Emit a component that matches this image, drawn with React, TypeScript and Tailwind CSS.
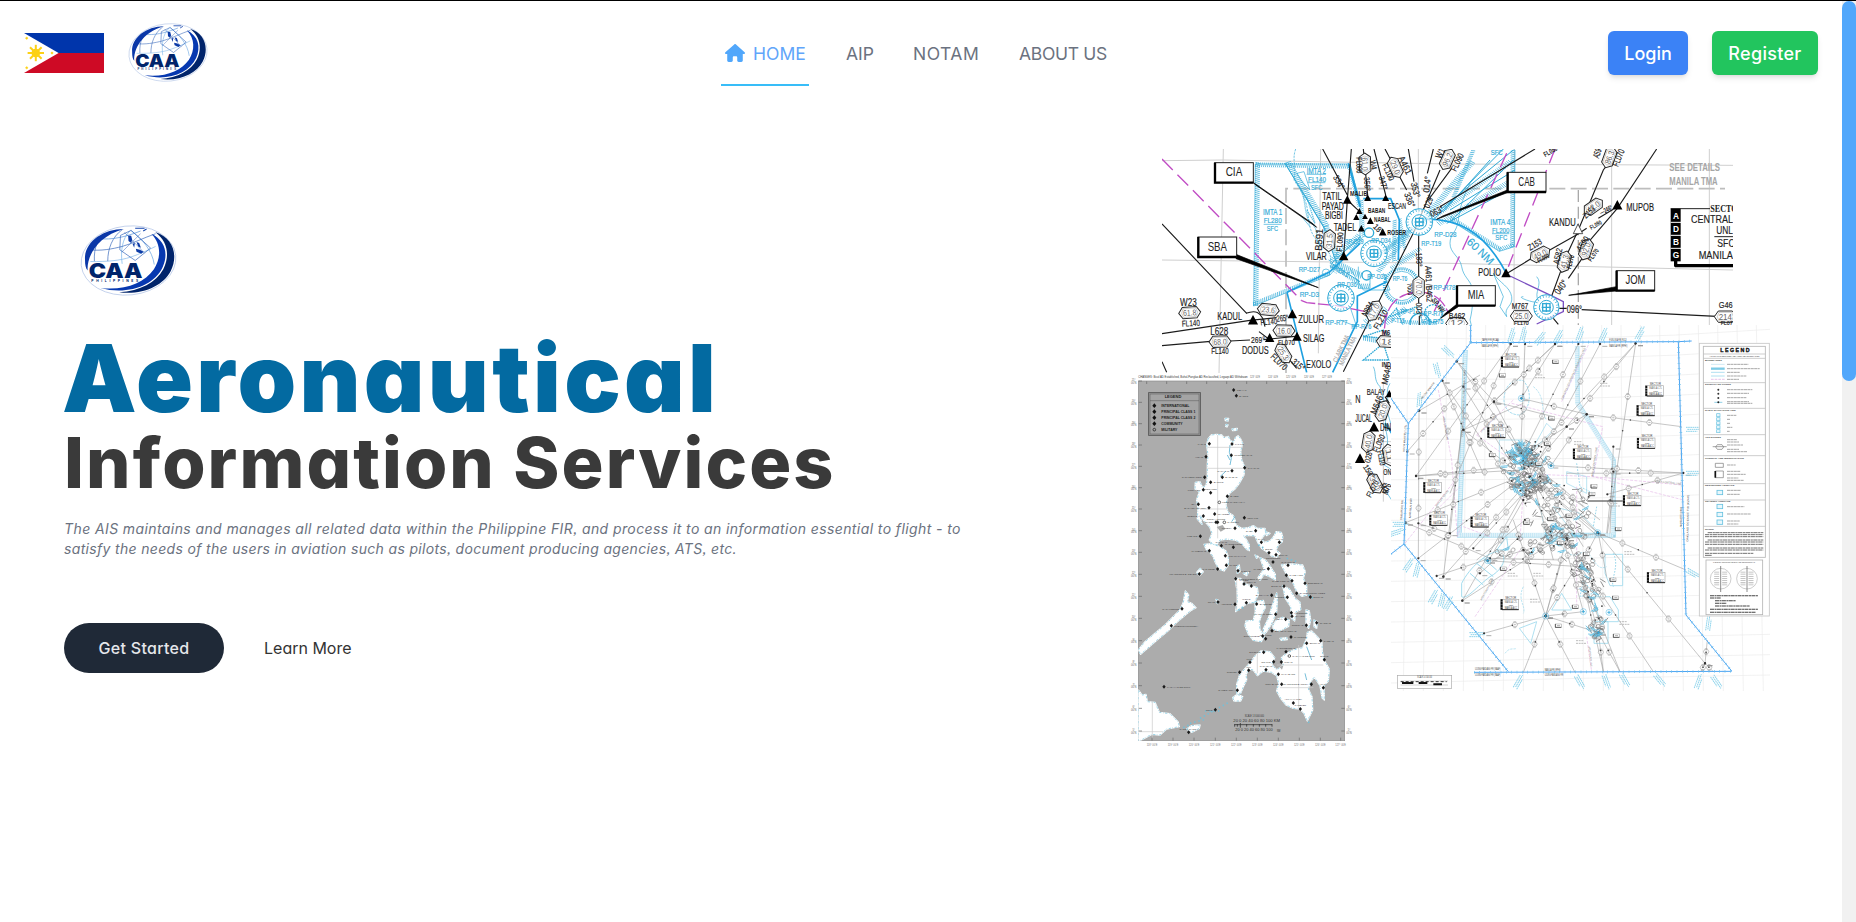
import React from "react";
import { FaHouse } from "react-icons/fa6";

const CYAN = "#2fa9d6";
const SKY = "#1ea0e0";
const MAGENTA = "#c04cc4";

type TextProps = {
  x: number;
  y: number;
  s: number;
  c: string;
  w?: number;
  r?: number;
  fill?: string;
  a?: "start" | "middle" | "end";
  b?: number;
};

/* A chart label: s = size, w = drawn width, r = rotation, a = anchor, b = weight. */
function T({ x, y, s, c, w, r, fill = "#1c1c1c", a = "start", b = 400 }: TextProps) {
  return (
    <text
      x={x}
      y={y}
      fontSize={s}
      fill={fill}
      stroke={s > 17 && b < 700 ? fill : undefined}
      strokeWidth={s > 17 && b < 700 ? 0.5 : undefined}
      textAnchor={a}
      fontWeight={b}
      textLength={w}
      lengthAdjust="spacingAndGlyphs"
      transform={r ? `rotate(${r} ${x} ${y})` : undefined}
    >
      {c}
    </text>
  );
}

function Logo({ className }: { className: string }) {
  return (
    <svg viewBox="119 74 290 212" className={className} preserveAspectRatio="none">
      <ellipse cx="264" cy="180" rx="142" ry="103" fill="#fff" stroke="#b9c9e8" strokeWidth="2.4" transform="rotate(-6 264 180)" />
      <g fill="none" stroke="#2f62b8" strokeWidth="2">
        <path d="M162 182 C160 140 172 110 205 96" />
        <path d="M202 182 C202 145 215 110 245 88" />
        <path d="M245 190 C240 150 245 115 268 92" stroke="#6fb1ea" />
        <path d="M270 90 C305 115 335 150 341 192" stroke="#5a9ce0" />
        <path d="M148 148 C180 152 215 146 245 138 S310 112 345 100" />
        <path d="M150 183 C200 184 240 180 270 170 S320 150 345 138" stroke="#7db6ea" />
        <path d="M180 115 C210 118 250 112 300 92" stroke="#4d8bd6" />
        <path d="M240 105 L272 90 L330 143 L284 180 L238 148 Z" />
        <path d="M244 155 L300 100 M252 96 L312 158" strokeWidth="1.4" />
        <path d="M284 84 H312 M318 86 L308 92" stroke="#1746ae" strokeWidth="3" />
      </g>
      <path d="M263 105 L272 106 L275 118 L272 128 L264 122 Z M276 130 L283 128 L281 142 Z M288 125 L296 128 L301 142 L293 138 Z M286 145 L298 148 L309 154 L302 160 L288 154 Z" fill="#0b3aa6" />
      <path d="M250 86 C185 86 130 128 134 178 C134 194 136 204 142 210 C138 172 168 108 250 86 Z" fill="#0a37a8" />
      <path d="M332 100 C374 120 384 160 366 200 C340 256 260 284 180 262 C252 270 310 248 340 206 C362 172 362 130 332 100 Z" fill="#0638b0" />
      <path d="M344 95 C398 112 414 165 390 212 C368 255 306 284 236 275 C300 270 346 246 368 206 C388 166 382 124 344 95 Z" fill="#00246b" />
      <g fontFamily="Inter, sans-serif" fill="#00246b">
        <text x="145" y="231" fontSize="62" fontWeight="900" textLength="161" lengthAdjust="spacingAndGlyphs">CAA</text>
        <text x="153" y="243" fontSize="10" fontWeight="700" textLength="140">PHILIPPINES</text>
      </g>
    </svg>
  );
}

function Flag() {
  return (
    <svg viewBox="0 0 80 40" className="h-10 w-20">
      <rect width="80" height="20" fill="#0035ab" />
      <rect y="20" width="80" height="20" fill="#ce0a25" />
      <path d="M0 0 L34.6 20 L0 40 Z" fill="#fff" />
      <g fill="#fcd116" stroke="#fcd116">
        <circle cx="11.8" cy="20" r="4.3" stroke="none" />
        {[0, 45, 90, 135].map((d) => (
          <path key={d} d="M3.6 20 H20" strokeWidth="2" transform={`rotate(${d} 11.8 20)`} />
        ))}
        <circle cx="2.7" cy="5.2" r="1" strokeWidth=".6" />
        <circle cx="2.7" cy="34.8" r="1" strokeWidth=".6" />
        <circle cx="28" cy="20" r="1" strokeWidth=".6" />
      </g>
    </svg>
  );
}

/* ------------------------------------------------------------------ */
/* Terminal area chart                                                 */
/* ------------------------------------------------------------------ */

type Hex = [number, number, number, string];
const HEXES: Hex[] = [
  [119, 518, -4, "61.8"], [210, 605, -2, "68.0"], [355, 509, 6, "23.6"], [402, 572, 2, "16.0"],
  [400, 640, 58, "25.3"], [538, 302, -86, "31.5"], [645, 72, 88, "61.0"], [736, 82, 66, "29.0"],
  [892, 58, -66, "96.2"], [672, 512, -62, "17.0"], [806, 442, 90, "70.0"], [1378, 52, -70, "86.3"],
  [1330, 200, -35, "42.0"], [1308, 328, -72, "92.0"], [1243, 365, -76, "41.3"], [1170, 343, -28, "49.0"],
  [1114, 528, 0, "25.0"], [1726, 530, 0, "214"], [698, 813, -70, "20.0"], [655, 905, -80, "40.0"],
  [675, 1030, 62, "31.0"], [712, 605, 4, "18"], [718, 945, 80, "11"], [920, 550, 0, "12"],
];

const FIXES: [number, number, number][] = [
  [592, 180, 14], [653, 174, 11], [707, 174, 11], [628, 214, 10], [619, 232, 10], [645, 230, 9], [661, 243, 11],
  [634, 266, 11], [698, 277, 12], [581, 349, 15], [309, 541, 16], [427, 523, 15], [441, 590, 15], [359, 594, 15],
  [1402, 196, 16], [1068, 400, 15], [718, 762, 12], [672, 862, 16], [630, 956, 16],
];

const VORS: [number, number, number][] = [
  [808, 246, 40], [672, 340, 40], [573, 474, 40], [1189, 502, 38],
];

function hatch(x1: number, y1: number, x2: number, y2: number, h: number) {
  const len = Math.hypot(x2 - x1, y2 - y1);
  const ux = (x2 - x1) / len;
  const uy = (y2 - y1) / len;
  let d = "";
  for (let t = 0; t < len; t += 6) {
    const x = x1 + ux * t;
    const y = y1 + uy * t;
    d += `M${x.toFixed(1)} ${y.toFixed(1)}l${(-uy * h + ux * 4).toFixed(1)} ${(ux * h + uy * 4).toFixed(1)}`;
  }
  return d;
}

const BANDS: [number, number, number, number, number][] = [
  [596, 72, 316, 67, -14], [316, 67, 311, 498, -14], [311, 498, 540, 405, -12], [405, 70, 520, 260, -18],
  [520, 260, 560, 370, -16], [600, 72, 632, 200, 10], [632, 290, 545, 370, 14], [545, 370, 630, 425, 12],
  [790, 270, 690, 350, 14], [800, 250, 960, 60, 18], [830, 235, 1075, 60, 16], [860, 245, 1090, 110, 16],
  [1095, 30, 1093, 320, 13], [1093, 320, 1048, 334, 12], [1048, 334, 900, 240, 13], [905, 170, 965, 27, 12],
  [740, 240, 738, 360, 12], [738, 360, 810, 320, 12], [640, 180, 645, 290, 10], [625, 445, 660, 445, -14], [700, 330, 820, 230, 16],
  [780, 290, 690, 400, 14], [640, 300, 600, 330, 14], [560, 360, 640, 400, 18], [760, 330, 745, 240, 10], [720, 380, 790, 340, 12],
  [640, 540, 700, 500, 18], [700, 540, 760, 500, 20], [760, 540, 860, 545, 12], [640, 585, 715, 600, 16],
];

const BOXES: [number, number, number, number, string, string][] = [
  [194, 68, 116, 60, "CIA", "305,124 316,134 500,262 490,252"],
  [144, 291, 116, 60, "SBA", "258,343 258,356 505,443 420,408"],
  [1072, 97, 116, 59, "CAB", "1072,150 1072,158 860,238 878,228"],
  [920, 437, 116, 60, "MIA", "920,493 925,500 872,535 886,520"],
  [1399, 392, 115, 60, "JOM", "1399,440 1399,453 1256,466 1290,460"],
];

const ROUTES = [
  "M36 252 L290 520 M36 581 L300 541 L380 533 M36 617 L182 604 M240 603 L300 600 M340 599 L435 589",
  "M36 665 L50 697 M580 695 L792 275 M792 275 L870 90 M806 280 V415 M806 468 V490 M808 528 V556",
  "M518 27 L592 165 M604 27 L592 180 L581 350 M592 180 L628 214 M640 27 L653 165 M672 27 L707 165 M705 27 L770 150 M775 27 L792 125",
  "M905 85 L835 180 M850 27 L832 100 M1155 27 L870 200 M1520 27 L1402 205 L1312 310 M1300 350 L1255 415 M1390 50 L1360 90 L1285 270 L1248 350 L1205 468",
  "M1068 402 L1150 352 M1190 335 L1283 283 L1310 265 M1345 235 L1390 208 M1228 505 H1250 M1295 509 L1700 529 M1210 535 L1225 553",
  "M288 520 C320 508 330 520 338 535 L345 560 M327 575 L360 600 M415 655 L440 685 M700 860 L722 868 M705 770 L718 790",
];

function AreaChart() {
  return (
    <svg
      viewBox="36 27 1713 1059"
      className="absolute left-8 top-0 h-[353px] w-[571px]"
      fontFamily="'Liberation Sans Narrow', 'Liberation Sans', sans-serif"
    >
      <rect x="36" y="27" width="1713" height="1059" fill="#fff" />
      <g stroke="#cfcfcf" strokeWidth="3" fill="none">
        <path d="M36 62 L220 60 L900 72 L1749 76 M36 360 L900 370 L1749 390 M220 27 L207 700 M512 27 L505 640 M805 27 V220 M1093 27 L1092 556 M1385 27 V556 M1678 27 V556 M700 730 V1085 M700 905 H725 M700 995 H725" />
      </g>
      <path d="M408 700 V146 H1725" stroke="#bdbdbd" strokeWidth="5" fill="none" strokeDasharray="48 16" />
      <path d="M1285 150 V556" stroke="#a9a9a9" strokeWidth="4" strokeDasharray="36 14" />

      <g fill="none" stroke={CYAN} strokeWidth="2">
        <path d={BANDS.map((b) => hatch(...b)).join("")} strokeWidth="2.2" />
        <path d="M596 72 H316 L311 498 L540 405 L630 300 V180 L596 72 M405 70 L540 290 M1095 30 L1093 320 L1048 334 L900 240" />
        <path d="M437 27 C425 60 440 80 432 120 C450 150 470 170 475 230 S500 300 530 330 S520 380 560 400" strokeDasharray="7 3" />
        <path d="M452 150 C470 180 460 230 485 250 S490 300 515 320 M470 170 L495 250 L470 210" strokeDasharray="4 2" strokeWidth="4" strokeOpacity=".7" />
        <path d="M900 245 L1090 60 M850 240 L1060 27 M880 215 L1020 60 M890 250 L1095 140 M870 210 L1090 30 M900 210 L1095 90" strokeWidth="3" />
        <path d="M960 130 C940 170 930 200 925 240 S900 280 900 310 S930 350 935 380 S960 420 965 440 S970 500 960 540 L965 560" />
        <path d="M1160 410 C1180 430 1150 460 1165 480 S1090 470 1120 470 M1030 400 C1050 430 1080 440 1085 470 S1060 500 1070 530 L1050 500 L1060 470 Z" />
        <path d="M440 100 L462 95 L480 150 L460 130 Z M455 230 L480 260 M600 385 L640 450 L720 450 L700 400 M570 540 L620 560 L600 500 M625 380 V445 H660 V400" />
        <path d="M640 660 L700 610 L716 660 Z M690 560 L740 505 L760 560 M720 530 L800 500 L820 550 M640 590 L700 570 L720 595 Z" strokeDasharray="5 2" strokeWidth="4" />
        <path d="M720 730 C700 760 725 790 710 830 S730 900 700 940 S740 980 722 1000 M690 740 L722 850 M705 1050 L725 1080 M670 680 C680 700 670 720 690 740" />
        {BANDS.slice(3, 8).map((b, i) => (
          <path key={i} d={`M${b[0]} ${b[1]} L${b[2]} ${b[3]}`} strokeWidth="3" />
        ))}
        <circle cx="755" cy="438" r="52" strokeWidth="9" strokeDasharray="3 3" />
        <circle cx="755" cy="438" r="44" />
        <circle cx="657" cy="278" r="14" strokeWidth="4" />
        <circle cx="650" cy="406" r="14" strokeWidth="4" />
        <circle cx="528" cy="398" r="11" />
        <circle cx="850" cy="520" r="26" strokeWidth="4" strokeDasharray="6 3" />
        <circle cx="810" cy="550" r="30" strokeWidth="4" />
      </g>
      <g fill="none" stroke={SKY} strokeWidth="5">
        <path d="M595 70 L630 200 M640 176 H722 L748 240 L745 360 M808 238 C920 232 1000 270 1068 398" />
        <path d="M411 457 L540 395 M411 457 L470 697 M548 697 L622 545 V468 L710 425 M540 395 L630 310" />
        <path d="M705 850 L725 880" />
      </g>
      <g fill="none" stroke={MAGENTA} strokeWidth="4">
        <path d="M36 57 L455 482" strokeDasharray="46 20" />
        <path d="M455 482 L470 488 L560 497 L710 528" strokeDasharray="42 8" />
        <path d="M706 620 C690 500 740 460 806 456 C850 456 880 480 895 520" strokeDasharray="46 8" />
        <path d="M1070 40 L850 520 M1215 27 L1075 380" strokeDasharray="46 22" />
        <path d="M1080 408 L1210 470 L1240 485 V515 L1160 552" stroke="#7a4fc0" />
      </g>

      <g fill="none" stroke="#1c1c1c" strokeWidth="3.4">
        {ROUTES.map((d) => (
          <path key={d} d={d} />
        ))}
      </g>

      {VORS.map(([x, y, r]) => (
        <g key={`${x}-${y}`} fill="#fff" stroke={CYAN} strokeWidth="3">
          <circle cx={x} cy={y} r={r} fillOpacity=".7" />
          <circle cx={x} cy={y} r={r - 5} fill="none" strokeWidth="7" strokeDasharray="2 7" />
          <circle cx={x} cy={y} r={r * 0.55} fill="none" />
          <path d={`M${x - 11} ${y - 11} h22 v22 h-22 Z M${x - 14} ${y} h28 M${x} ${y - 14} v28`} strokeWidth="4" />
        </g>
      ))}

      {HEXES.map(([x, y, r, t], i) => (
        <g key={i} transform={`translate(${x} ${y}) rotate(${r})`}>
          <path d="M-33 0 L-21 -17 H21 L33 0 L21 17 H-21 Z" fill="#fff" stroke="#2a2a2a" strokeWidth="3" />
          <path d="M-24 0 L-19 -13 H19 L24 0 L19 13 H-19 Z" fill="none" stroke="#888" strokeWidth="1.2" />
          <text y="9" fontSize="25" textAnchor="middle" fill="#666" textLength="40" lengthAdjust="spacingAndGlyphs">{t}</text>
        </g>
      ))}

      {FIXES.map(([x, y, h]) => (
        <path key={`${x}-${y}`} d={`M${x} ${y - h} L${x + h * 0.95} ${y + h * 0.8} H${x - h * 0.95} Z`} fill="#000" />
      ))}
      <path d="M1284 252 L1298 281 H1270 Z" fill="#fff" stroke="#333" strokeWidth="2.5" />

      <g fill="#111">
        <T x={517} y={181} s={33} w={58} c="TATIL" />
        <T x={515} y={210} s={31} w={66} c="PAYAD" />
        <T x={525} y={238} s={31} w={54} c="BIGBI" />
        <T x={551} y={273} s={32} w={68} c="TADEL" />
        <T x={600} y={169} s={24} w={52} c="MALIB" b={700} />
        <T x={714} y={207} s={25} w={54} c="ESCAN" />
        <T x={654} y={220} s={24} w={52} c="BABAN" b={700} />
        <T x={672} y={245} s={23} w={50} c="NABAL" b={700} />
        <T x={712} y={284} s={24} w={56} c="ROSER" b={700} />
        <T x={468} y={360} s={34} w={62} c="VILAR" />
        <T x={202} y={539} s={35} w={74} c="KADUL" />
        <T x={445} y={548} s={35} w={77} c="ZULUR" />
        <T x={459} y={605} s={35} w={64} c="SILAG" />
        <T x={276} y={641} s={35} w={80} c="DODUS" />
        <T x={468} y={685} s={35} w={76} c="EXOLO" />
        <T x={90} y={497} s={34} w={50} c="W23" />
        <T x={96} y={560} s={26} w={54} c="FL140" r={-3} />
        <T x={181} y={586} s={32} w={54} c="L628" />
        <T x={184} y={641} s={26} w={52} c="FL140" />
        <T x={303} y={608} s={29} w={42} c="269°" />
        <T x={380} y={545} s={27} w={36} c="265°" r={-4} />
        <T x={332} y={556} s={24} w={50} c="FL140" r={-5} />
        <T x={384} y={614} s={22} w={50} c="FL070" />
        <T x={360} y={652} s={27} w={58} c="FL070" r={44} />
        <T x={423} y={668} s={27} w={42} c="315°" r={40} />
        <T x={515} y={333} s={30} w={66} c="B591" r={-86} />
        <T x={576} y={335} s={24} w={58} c="FL090" r={-86} />
        <T x={548} y={112} s={26} w={44} c="334°" r={60} />
        <T x={618} y={52} s={24} w={48} c="FL080" r={88} />
        <T x={642} y={112} s={24} w={42} c="356°" r={86} />
        <T x={660} y={62} s={24} w={28} c="W4" r={80} />
        <T x={686} y={112} s={24} w={40} c="347°" r={74} />
        <T x={696} y={74} s={24} w={54} c="FL100" r={66} />
        <T x={744} y={54} s={28} w={58} c="A461" r={64} />
        <T x={782} y={130} s={27} w={46} c="353°" r={76} />
        <T x={762} y={162} s={27} w={46} c="336°" r={68} />
        <T x={838} y={158} s={27} w={48} c="014°" r={-84} />
        <T x={838} y={206} s={27} w={40} c="029°" r={-68} />
        <T x={846} y={232} s={27} w={42} c="063°" r={-28} />
        <T x={874} y={58} s={30} w={30} c="W1" r={-66} />
        <T x={918} y={96} s={27} w={56} c="FL090" r={-64} />
        <T x={798} y={338} s={25} w={42} c="183°" r={88} />
        <T x={826} y={378} s={26} w={108} c="A461 /B462" r={88} />
        <T x={798} y={488} s={25} w={42} c="003°" r={88} />
        <T x={772} y={430} s={18} w={36} c="7000" r={88} />
        <T x={650} y={532} s={27} w={46} c="N884" r={-60} />
        <T x={684} y={570} s={25} w={62} c="FL210" r={-60} />
        <T x={668} y={262} s={24} w={32} c="18°" r={45} />
        <T x={695} y={586} s={24} w={26} c="M6" b={700} />
        <T x={695} y={680} s={22} w={28} c="IND" b={700} />
        <T x={712} y={735} s={26} w={58} c="M646" r={-78} />
        <T x={650} y={765} s={26} w={56} c="BALAY" />
        <T x={678} y={825} s={28} w={58} c="M646" r={-68} />
        <T x={616} y={790} s={34} w={16} c="N" />
        <T x={616} y={847} s={30} w={50} c="JUCAL" />
        <T x={690} y={872} s={30} w={34} c="DIN" />
        <T x={684} y={940} s={26} w={56} c="FL090" r={-66} />
        <T x={660} y={970} s={25} w={40} c="028°" r={-78} />
        <T x={682} y={932} s={24} w={46} c="FL110" r={80} />
        <T x={638} y={980} s={24} w={44} c="150°" r={58} />
        <T x={662} y={1074} s={24} w={54} c="FL070" r={-62} />
        <T x={700} y={1006} s={28} w={24} c="ON" />
        <T x={712} y={1066} s={28} w={34} c="M76" r={-66} />
        <T x={688} y={1036} s={26} w={28} c="M3" r={60} />

        <T x={985} y={408} s={34} w={68} c="POLIO" />
        <T x={1197} y={258} s={35} w={80} c="KANDU" />
        <T x={1429} y={214} s={34} w={83} c="MUPOB" />
        <T x={1140} y={332} s={26} w={44} c="Z153" r={-30} />
        <T x={1166} y={370} s={20} w={38} c="FL090" r={-28} b={700} />
        <T x={1308} y={236} s={24} w={40} c="Z153" r={-42} />
        <T x={1324} y={270} s={19} w={38} c="FL090" r={-30} b={700} />
        <T x={1354} y={226} s={22} w={40} c="—246°" r={-28} b={700} />
        <T x={1226} y={374} s={26} w={48} c="A582" r={-76} />
        <T x={1262} y={388} s={20} w={42} c="FL070" r={-74} b={700} />
        <T x={1292} y={336} s={26} w={48} c="A590" r={-56} />
        <T x={1324} y={366} s={20} w={42} c="FL070" r={-56} b={700} />
        <T x={1228} y={466} s={30} w={46} c="040°" r={-55} />
        <T x={1250} y={519} s={30} w={46} c="096°" />
        <T x={1085} y={508} s={28} w={50} c="M767" />
        <T x={1092} y={556} s={18} w={44} c="FL170" />
        <T x={896} y={538} s={28} w={50} c="B462" />
        <T x={1346} y={56} s={28} w={28} c="A59" r={-70} />
        <T x={1404} y={82} s={28} w={54} c="FL070" r={-68} />
        <T x={1186} y={52} s={22} w={44} c="FL080" r={-30} b={700} />
        <T x={1706} y={505} s={28} w={42} c="G46" />
        <T x={1712} y={556} s={18} w={36} c="FL07" />
        <T x={844} y={482} s={22} w={50} c="SP. NW" r={50} b={700} />
      </g>

      <g>
        <T x={1558} y={94} s={33} w={152} c="SEE DETAILS" fill="#a6a6a6" b={700} />
        <T x={1558} y={136} s={33} w={145} c="MANILA TMA" fill="#a6a6a6" b={700} />
        <T x={560} y={668} s={20} w={88} c="CLARK TMA" r={-64} fill="#a5a5a5" />
        <T x={578} y={678} s={20} w={94} c="MANILA TMA" r={-64} fill="#a5a5a5" />
        <T x={470} y={101} s={25} w={58} c="IMTA 2" fill={CYAN} />
        <T x={474} y={125} s={24} w={54} c="FL140" fill={CYAN} />
        <T x={483} y={149} s={23} w={34} c="SFC" fill={CYAN} />
        <T x={339} y={224} s={25} w={58} c="IMTA 1" fill={CYAN} />
        <T x={341} y={249} s={24} w={54} c="FL280" fill={CYAN} />
        <T x={350} y={272} s={23} w={34} c="SFC" fill={CYAN} />
        <T x={1021} y={254} s={25} w={60} c="IMTA 4" fill={CYAN} />
        <T x={1026} y={278} s={24} w={52} c="FL200" fill={CYAN} />
        <T x={1036} y={301} s={23} w={36} c="SFC" fill={CYAN} />
        <T x={446} y={397} s={24} w={64} c="RP-D27" fill={CYAN} />
        <T x={449} y={470} s={24} w={58} c="RP-D3" fill={CYAN} />
        <T x={526} y={556} s={24} w={66} c="RP-R77" fill={CYAN} />
        <T x={562} y={440} s={22} w={58} c="RP-D36" fill={CYAN} />
        <T x={584} y={312} s={22} w={56} c="RP-D39" fill={CYAN} />
        <T x={664} y={309} s={22} w={58} c="RP-D34" fill={CYAN} />
        <T x={652} y={416} s={22} w={58} c="RP-D35" fill={CYAN} />
        <T x={728} y={424} s={24} w={44} c="RP-T6" fill={CYAN} />
        <T x={814} y={318} s={24} w={60} c="RP-T19" fill={CYAN} />
        <T x={853} y={290} s={24} w={66} c="RP-D28" fill={CYAN} />
        <T x={850} y={450} s={24} w={66} c="RP-R78" fill={CYAN} />
        <T x={820} y={527} s={24} w={62} c="RP-R71" fill={CYAN} />
        <T x={820} y={553} s={22} w={60} c="RP-R75" fill={CYAN} />
        <T x={752} y={522} s={24} w={44} c="RP-P1" fill={CYAN} />
        <T x={724} y={548} s={22} w={40} c="P-T15" fill={CYAN} />
        <T x={604} y={566} s={22} w={60} c="RP-R76" fill={CYAN} />
        <T x={540} y={384} s={22} w={60} c="AREA 2" fill={CYAN} r={28} />
        <T x={1022} y={44} s={20} w={36} c="SFC" fill={CYAN} />
        <T x={948} y={308} s={34} w={98} c="60 NM" fill={CYAN} r={44} />
      </g>
      <path d="M470 103 h58 M474 128 h52 M341 253 h54 M1026 281 h52" stroke={CYAN} strokeWidth="2" />

      {BOXES.map(([x, y, w, h, t, tail]) => (
        <g key={t}>
          <polygon points={tail} fill="#000" stroke="#000" strokeWidth="2" />
          <rect x={x} y={y} width={w} height={h} fill="#fff" stroke="#222" strokeWidth="3" />
          <path d={`M${x + 1} ${y} V${y + h} H${x + w}`} fill="none" stroke="#000" strokeWidth="7" />
          <text x={x + w / 2} y={y + 41} fontSize="37" textAnchor="middle" textLength={t === "JOM" ? 60 : t === "SBA" ? 58 : 50} lengthAdjust="spacingAndGlyphs" fill="#222">{t}</text>
        </g>
      ))}

      <path d="M1562 206 H1680 M1693 290 H1749" stroke="#222" strokeWidth="3" />
      <path d="M1575 377 H1749" stroke="#000" strokeWidth="10" />
      <rect x="1562" y="206" width="30" height="158" fill="#000" />
      <rect x="1572" y="360" width="10" height="20" fill="#000" />
      {["A", "D", "B", "G"].map((l, i) => (
        <text key={l} x="1578" y={238 + i * 39} fontSize="25" fontWeight="700" fill="#fff" textAnchor="middle">{l}</text>
      ))}
      <path d="M1562 247 h32 M1562 286 h32 M1562 325 h32" stroke="#fff" strokeWidth="3" />
      <text x="1681" y="215" fontSize="32" fontWeight="700" fill="#222" fontFamily="'Liberation Serif', serif" textLength="82" lengthAdjust="spacingAndGlyphs">SECTO</text>
      <T x={1623} y={250} s={34} w={126} c="CENTRAL" fill="#222" />
      <T x={1699} y={281} s={34} w={50} c="UNL" fill="#222" />
      <T x={1702} y={322} s={34} w={52} c="SFC" fill="#222" />
      <T x={1646} y={357} s={33} w={103} c="MANILA" fill="#222" />
    </svg>
  );
}

/* ------------------------------------------------------------------ */
/* Aerodrome map                                                       */
/* ------------------------------------------------------------------ */

const LANDS = [
  "264,222 274,210 290,208 305,210 312,218 325,214 330,226 342,232 346,218 354,212 362,222 368,235 362,260 365,285 374,305 372,330 358,355 345,372 330,384 322,396 318,420 324,442 340,452 345,465 348,480 365,490 385,488 400,482 412,490 435,490 438,505 425,520 432,532 450,528 463,512 468,500 484,502 488,515 487,530 475,540 468,556 480,565 470,577 455,573 440,560 425,550 413,532 405,512 385,512 370,512 380,525 388,540 388,557 380,553 365,535 345,525 320,522 300,525 290,540 278,538 268,525 276,505 270,488 262,478 250,465 240,450 246,478 232,462 234,430 230,405 238,380 225,372 226,352 240,350 248,368 258,362 262,340 262,300 264,270 260,240",
  "252,538 275,536 300,545 318,558 325,575 325,600 312,618 296,612 285,590 280,575 268,560 258,552",
  "55,855 75,830 105,805 135,780 155,760 180,735 190,712 196,678 206,690 202,710 215,715 228,728 212,737 196,750 168,774 143,799 112,824 87,846 62,868",
  "345,640 362,640 372,656 392,662 412,668 415,690 402,712 382,715 360,730 347,740 352,705 350,670",
  "405,710 430,706 436,728 425,748 418,770 420,795 434,812 424,830 400,826 385,808 375,782 378,768 400,766 406,740",
  "470,684 472,705 470,740 457,772 440,800 432,808 430,792 445,760 456,725",
  "458,782 470,764 488,757 508,765 506,784 478,798 460,793",
  "484,600 515,597 548,600 556,620 550,640 560,662 560,690 545,694 530,680 522,660 512,642 498,625",
  "488,662 508,672 525,700 540,712 542,734 528,740 524,768 514,760 512,725 496,700",
  "420,578 436,585 448,600 466,628 466,645 448,634 432,628 420,646 414,638 432,612",
  "350,985 350,958 358,932 374,912 388,896 406,872 422,858 450,860 464,878 455,898 470,915 490,900 484,878 500,865 520,855 548,848 560,820 562,802 575,798 592,815 606,832 607,860 612,885 628,912 625,948 612,962 613,1005 606,998 600,962 583,936 572,950 565,972 576,995 578,1035 562,1068 552,1045 540,1032 520,1030 498,1020 482,1000 470,978 476,955 470,932 455,922 430,918 412,932 400,915 388,912 378,928 380,945 370,965 362,985",
  "338,998 352,988 368,995 362,1008 342,1008",
  "55,975 66,990 78,988 82,1010 105,1012 118,1042 150,1046 174,1070 178,1085 140,1092 120,1110 95,1108 60,1127 55,1127",
  "200,1092 215,1082 240,1080 238,1090 215,1102",
  "558,735 568,738 572,765 566,790 558,780", "582,765 592,770 590,790 582,785",
  "315,160 326,160 324,168 316,167", "318,178 324,180 321,186 317,184", "336,192 352,190 350,196 338,197",
  "436,500 450,505 440,512", "350,605 358,600 360,620 352,625", "370,625 385,622 380,632", "240,610 250,620 238,632 230,622",
  "405,570 415,575 410,580", "480,820 500,818 502,824 484,826", "288,703 296,706 292,716",
];

const AERODROMES: [number, number, string, number][] = [
  [268, 236, "LAOAG", -1], [336, 237, "LAL-LO", 1], [334, 271, "TUGUEGARAO", 1], [258, 275, "VIGAN", -1], [374, 308, "PALANAN", 1],
  [336, 317, "CAUAYAN", -1], [307, 337, "BAGABAG", 1], [254, 337, "SAN FERNANDO", -1], [272, 352, "BAGUIO", 1], [250, 374, "LINGAYEN", -1],
  [272, 383, "ROSALES", 0], [322, 394, "BALER", 1], [235, 418, "IBA", -1], [267, 428, "BASA/CLARK INTL", -1], [250, 453, "SUBIC BAY", -1],
  [284, 447, "PLARIDEL", 1], [288, 472, "NINOY AQUINO", 0], [293, 472, "MANILA", -1], [373, 458, "JOMALIG", 1], [345, 490, "LUCENA", -1],
  [407, 497, "DAET", -1], [241, 514, "LUBANG", -1], [268, 557, "MAMBURAO", -1], [304, 542, "CALAPAN", 0], [340, 547, "MARINDUQUE", 0],
  [424, 532, "NAGA", 0], [478, 532, "VIRAC", 0], [447, 563, "BICOL", 0], [468, 569, "BULAN", 1], [316, 572, "PINAMALAYAN", 1],
  [319, 601, "WASIG", 1], [293, 612, "SAN JOSE", -1], [354, 617, "TABLAS", 1], [459, 591, "SORSOGON", 0], [504, 601, "CATARMAN", 0],
  [445, 611, "MASBATE", -1], [238, 627, "FRANCISCO B. REYES", -1], [347, 641, "GODOFREDO P. RAMOS", 1], [372, 657, "KALIBO", 0],
  [394, 663, "ROXAS", 0], [499, 631, "CALBAYOG", 1], [516, 647, "CATBALOGAN", -1], [555, 655, "BORONGAN", 1], [492, 664, "BILIRAN", -1],
  [530, 685, "DANIEL ROMUALDEZ", 1], [455, 691, "BANTAYAN", -1], [502, 697, "ORMOC", -1], [571, 696, "GUIUAN", 1], [294, 711, "CUYO", -1],
  [345, 718, "ANTIQUE", -1], [379, 713, "ILOILO", 0], [410, 717, "BACOLOD", 1], [186, 731, "SAN VICENTE", -1], [467, 748, "MACTAN-CEBU", -1],
  [514, 743, "HILONGOS", 1], [516, 754, "MAASIN", 1], [497, 763, "UBAY", -1], [590, 773, "SIARGAO", 1], [154, 782, "PUERTO PRINCESA", 1],
  [559, 781, "SURIGAO", -1], [456, 797, "BOHOL-PANGLAO", 1], [428, 813, "DUMAGUETE", -1], [437, 821, "SIQUIJOR", 0], [513, 816, "CAMIGUIN", 1],
  [602, 827, "TANDAG", 1], [560, 835, "BUTUAN", 1], [431, 862, "DIPOLOG", -1], [498, 860, "LAGUINDINGAN", 0], [613, 884, "BISLIG", 0],
  [390, 892, "LILOY", 0], [461, 890, "OZAMIZ", -1], [484, 891, "ILIGAN", 1], [438, 914, "PAGADIAN", 0], [359, 922, "SIOCON", -1],
  [386, 916, "IPIL", 0], [475, 928, "MALABANG", 1], [485, 958, "COTABATO", -1], [574, 958, "FRANCISCO BANGOY", -1], [610, 968, "MATI", 0],
  [132, 965, "KAGAYAN DE SULU", 1], [352, 976, "ZAMBOANGA", -1], [520, 1014, "ALLAH VALLEY", 0], [541, 1032, "TAMBLER", 0],
  [286, 1034, "JOLO", -1], [206, 1102, "SANGA-SANGA", 0], [341, 75, "ITBAYAT", 1], [349, 92, "BASCO", 1],
];

const LAT_ROWS = [48, 112, 176, 240, 304, 368, 432, 497, 562, 628, 694, 760, 827, 894, 962, 1030, 1098];
const LON_COLS = [96, 159, 222, 286, 349, 412, 475, 538, 601, 662];

function AerodromeMap() {
  return (
    <svg
      viewBox="30 24 675 1131"
      className="absolute left-0 top-[224px] h-[377px] w-[225px]"
      fontFamily="'Liberation Sans', sans-serif"
    >
      <defs>
        <clipPath id="mapFrame">
          <rect x="55" y="48" width="619" height="1079" />
        </clipPath>
      </defs>
      <rect x="30" y="24" width="675" height="1131" fill="#fff" />
      <rect x="55" y="48" width="619" height="1079" fill="#acacac" stroke="#8b8b8b" strokeWidth="2" />
      <g clipPath="url(#mapFrame)">
        {LANDS.map((p) => (
          <polygon key={p} points={p} fill="#fff" stroke="#fff" strokeWidth="4" strokeLinejoin="round" />
        ))}
        {LANDS.map((p) => (
          <polygon key={p} points={p} fill="none" stroke="#8fcde2" strokeWidth="2.6" strokeDasharray="7 5 2 4" strokeLinejoin="round" />
        ))}
        <path d="M330 240 L328 262 L334 280 L330 300 M318 318 L300 335 M345 455 L335 470 M560 845 L575 885 M555 925 L560 945 M322 270 L330 285" fill="none" stroke="#55aed0" strokeWidth="2.4" />
        <path d="M293 210 V520 M262 247 H368 M240 432 H325 M262 310 H372 M97 1010 V1120 M58 1100 H130 M536 840 V1030 M480 968 H580 M470 900 H610 M412 865 V925 M350 645 V735" stroke="#c9c9c9" strokeWidth="2" fill="none" />
        <path d="M415 540 L430 548 M500 580 L530 590 M565 690 L580 700 M355 735 L370 728 M565 1070 L570 1078 M210 1075 L260 1062 M240 1060 L330 1010 M255 1038 H300 M190 1088 L212 1078" stroke="#6fc0da" strokeWidth="5" strokeDasharray="4 9" />
        <path d="M290 486 L308 480 L316 492 L302 500 Z M478 905 L490 902 L486 914 Z" fill="#acacac" />
      </g>
      {AERODROMES.map(([x, y, name, side], i) => (
        <g key={i} fill="#1a1a1a">
          <path d={`M${x} ${y - 6} l5 6 l-5 6 l-5 -6 Z`} />
          <text
            x={side === 0 ? x : x + side * 9}
            y={side === 0 ? y - 8 : y + 3}
            fontSize="7.5"
            fill="#3d3d3d"
            textAnchor={side === 0 ? "middle" : side > 0 ? "start" : "end"}
          >
            {name}
          </text>
        </g>
      ))}
      {[[298, 412, "FORT MAGSAYSAY"], [313, 472, "SANGLEY"], [508, 873, "CAGAYAN DE ORO"]].map(([x, y, n]) => (
        <g key={String(n)}>
          <circle cx={x} cy={y} r="4" fill="#fff" stroke="#222" strokeWidth="2" />
          <text x={Number(x) + 9} y={Number(y) + 3} fontSize="7.5" fill="#3d3d3d">{n}</text>
        </g>
      ))}

      <rect x="86" y="83" width="155" height="128" fill="#a4a4a4" stroke="#555" strokeWidth="3" />
      <path d="M90 107 H237 M90 87 H237 V207 H90 Z" fill="none" stroke="#5c5c5c" strokeWidth="1.6" />
      <T x={159} y={100} s={11} w={50} c="LEGEND" a="middle" b={700} />
      {["INTERNATIONAL", "PRINCIPAL CLASS 1", "PRINCIPAL CLASS 2", "COMMUNITY", "MILITARY"].map((t, i) => (
        <g key={t}>
          {i === 4 ? (
            <circle cx="103" cy="194" r="4" fill="none" stroke="#111" strokeWidth="2" />
          ) : (
            <path d={`M103 ${115 + i * 18} l6 7 l-6 7 l-6 -7 Z`} fill="#111" />
          )}
          <T x={124} y={126 + i * 18} s={10.5} w={[84, 102, 102, 64, 48][i]} c={t} b={700} />
        </g>
      ))}

      <T x={55} y={38} s={8.5} w={328} c="CHANGES: Bicol AD Established, Bohol-Panglao AD Reclassified, Legazpi AD Withdrawn" fill="#333" />
      {["123° 00'E", "124° 00'E", "125° 00'E", "126° 00'E", "127° 00'E"].map((t, i) => (
        <T key={t} x={390 + i * 54} y={38} s={8} w={30} c={t} fill="#666" />
      ))}
      {LON_COLS.map((x, i) => (
        <g key={x}>
          <T x={x} y={1143} s={9} w={32} c={`${118 + i}° 00'E`} a="middle" fill="#777" />
          <path d={`M${x} 1118 v9 M${80 + i * 60} 49 v8`} stroke="#666" strokeWidth="2" />
        </g>
      ))}
      {LAT_ROWS.map((y, i) => (
        <g key={y} fill="#777">
          <path d={`M56 ${y} h10 M664 ${y} h10`} stroke="#666" strokeWidth="2" />
          <T x={41} y={y} s={8} c={`${21 - i}°`} a="middle" fill="#666" />
          <T x={41} y={y + 8} s={8} c="00'N" a="middle" fill="#666" />
          <T x={687} y={y} s={8} c={`${21 - i}°`} a="middle" fill="#666" />
          <T x={687} y={y + 8} s={8} c="00'N" a="middle" fill="#666" />
        </g>
      ))}
      <T x={403} y={1055} s={8.5} w={58} c="SCALE 1:3 000 000" a="middle" fill="#333" />
      <path d="M344 1079 H456 M344 1077 v8 M352 1077 v8 M361 1074 v14 M380 1077 v8 M400 1077 v8 M418 1077 v8 M437 1077 v8 M456 1077 v8" stroke="#333" strokeWidth="2.4" fill="none" />
      <T x={340} y={1070} s={8} w={140} c="20 0 20 40 60 80 100 KM" fill="#333" />
      <T x={346} y={1097} s={8} w={112} c="20 0 20 40 60 80 100" fill="#333" />
      <T x={471} y={1101} s={8} w={10} c="NM" fill="#333" />
    </svg>
  );
}

/* ------------------------------------------------------------------ */
/* Enroute chart                                                       */
/* ------------------------------------------------------------------ */

function makeRandom(seed: number) {
  let s = seed;
  return () => {
    s = (s * 1664525 + 1013904223) % 4294967296;
    return s / 4294967296;
  };
}

const AIRWAYS: [number, number, number, number][] = [
  [392, 72, 210, 520], [435, 72, 422, 400], [525, 72, 342, 245], [525, 72, 424, 235], [595, 72, 430, 400], [660, 72, 450, 470],
  [767, 70, 560, 320], [767, 70, 682, 640], [767, 70, 430, 430], [230, 124, 342, 245], [230, 124, 430, 410], [187, 182, 440, 560],
  [392, 72, 108, 468], [525, 72, 250, 330], [117, 272, 115, 715], [187, 182, 310, 462], [118, 272, 300, 165], [82, 395, 250, 200],
  [424, 235, 620, 283], [620, 283, 905, 320], [342, 245, 430, 410], [250, 330, 430, 470], [250, 330, 430, 250],
  [108, 468, 420, 450], [108, 468, 370, 442], [513, 437, 910, 459], [910, 459, 560, 460], [682, 523, 910, 459], [77, 608, 420, 470],
  [77, 608, 330, 715], [115, 610, 210, 640], [115, 715, 430, 470], [190, 770, 245, 330], [190, 770, 430, 500], [247, 842, 430, 520],
  [247, 842, 560, 640], [170, 768, 330, 715], [323, 722, 560, 655], [323, 722, 600, 740], [330, 715, 545, 720], [312, 940, 497, 888],
  [497, 888, 430, 690], [497, 888, 430, 1057], [497, 888, 585, 1057], [497, 888, 620, 690], [497, 888, 655, 938], [497, 888, 610, 875],
  [430, 690, 400, 600], [430, 430, 560, 655], [440, 460, 655, 640], [430, 430, 610, 560], [420, 400, 660, 600], [450, 470, 655, 650],
  [560, 655, 497, 888], [653, 638, 918, 750], [653, 638, 975, 1030], [653, 638, 600, 740], [560, 655, 720, 1055], [545, 640, 610, 875],
  [600, 740, 670, 1055], [600, 740, 655, 938], [655, 938, 670, 1055], [655, 938, 720, 1055], [610, 740, 820, 1055], [605, 745, 675, 860],
  [975, 1030, 982, 960], [975, 1030, 962, 1055], [975, 1030, 1000, 1055], [620, 283, 560, 320], [620, 283, 513, 437], [700, 455, 680, 640],
  [700, 380, 690, 640], [560, 320, 430, 400], [560, 320, 450, 450], [280, 685, 430, 520], [300, 760, 430, 640], [210, 640, 245, 330],
  [430, 410, 655, 640], [436, 520, 600, 660], [480, 470, 610, 680], [440, 410, 520, 720], [560, 655, 655, 640], [250, 200, 500, 600],
  [497, 888, 545, 720], [430, 540, 330, 715], [655, 640, 680, 770], [342, 245, 520, 290], [435, 600, 290, 720],
];

const SECTORS: [number, number][] = [
  [363, 110], [796, 197], [770, 256], [771, 354], [322, 322], [579, 386], [130, 487], [729, 526], [148, 585], [272, 590], [362, 838], [801, 757],
];

const SMALL_TAGS: [number, number][] = [
  [518, 120], [358, 161], [506, 290], [493, 366], [328, 400], [467, 426], [633, 494], [627, 517], [706, 622], [558, 582],
  [503, 592], [431, 603], [532, 664], [610, 697], [361, 741], [690, 774], [577, 855], [698, 828], [526, 912], [700, 942],
];

const CHART_EDGE = "M272 15 V68 M272 68 L895 65 L935 63 M895 65 L918 885 L1055 1053 M282 1057 L1055 1054 M272 68 L85 310 L72 672 L385 1055 M33 235 L85 310 M33 702 L72 672";

const EDGE_LABELS: [number, number, number][] = [
  [395, 45, -72], [430, 42, -75], [535, 50, -60], [600, 42, -70], [670, 45, -65], [780, 40, -60], [205, 95, 45], [172, 150, 75],
  [118, 240, -85], [60, 612, 0], [50, 636, -18], [85, 735, -55], [110, 750, -75], [160, 830, -60], [185, 840, -75], [205, 850, -60],
  [290, 943, 0], [415, 1085, -60], [600, 1085, 60], [680, 1085, 70], [735, 1080, 60], [840, 1080, 50], [985, 910, -82], [940, 327, 0],
  [940, 459, 0], [940, 760, 30], [955, 1085, -70], [1010, 1085, 55], [480, 55, -50],
];

/* centre x, centre y, radius x, radius y, count, share of blue marks */
const CLUSTERS: [number, number, number, number, number, number][] = [
  [432, 405, 38, 40, 70, 0.6], [440, 440, 75, 80, 110, 0.12], [450, 495, 50, 36, 60, 0.1], [560, 645, 70, 36, 50, 0.2],
  [608, 745, 34, 50, 36, 0.12], [655, 925, 30, 40, 28, 0.2], [530, 560, 110, 80, 60, 0.16], [640, 830, 44, 70, 26, 0.14],
  [470, 690, 120, 40, 34, 0.1],
];

function EnrouteChart() {
  const rnd = makeRandom(11);
  const specks: { x: number; y: number; k: number; r: number; blue: boolean }[] = [];
  CLUSTERS.forEach(([cx, cy, rx, ry, n, share]) => {
    for (let i = 0; i < n; i++) {
      const a = rnd() * Math.PI * 2;
      const q = Math.pow(rnd(), 0.65);
      specks.push({ x: cx + Math.cos(a) * q * rx, y: cy + Math.sin(a) * q * ry, k: rnd(), r: rnd() * 140 - 70, blue: rnd() < share });
    }
  });
  return (
    <svg
      viewBox="33 15 1137 1098"
      className="absolute left-[261px] top-44 h-[366px] w-[379px]"
      fontFamily="'Liberation Sans', sans-serif"
    >
      <rect x="33" y="15" width="1137" height="1098" fill="#fff" />
      <g stroke="#ececec" strokeWidth="2" fill="none">
        {Array.from({ length: 19 }, (_, i) => (
          <path key={i} d={`M${85 + i * 58} 15 L${70 + i * 60} 1113`} />
        ))}
        {Array.from({ length: 18 }, (_, i) => (
          <path key={i} d={`M33 ${52 + i * 61} Q600 ${70 + i * 59} 1170 ${28 + i * 61}`} />
        ))}
      </g>

      <path d="M256 90 L238 645 H700 V422 L592 250 L591 78" fill="none" stroke="#dff2fa" strokeWidth="13" />
      <path d="M256 90 L238 645 H700 V422 L592 250 L591 78" fill="none" stroke="#a6daee" strokeWidth="12" strokeDasharray="1.2 5" />
      <path d="M262 90 L244 638 M232 652 H706 V418 L598 246 L597 78 M250 92 L232 652" fill="none" stroke="#93d2ea" strokeWidth="1.8" />

      <g fill="none" stroke="#9bd8ec" strokeWidth="2">
        <path d="M372 235 C375 190 405 175 430 182 C460 215 450 270 420 285 C385 285 370 260 372 235 Z" strokeWidth="2.6" strokeDasharray="8 3" />
        <path d="M358 360 H430 M358 360 V440 L400 470 M500 310 L450 400 L520 330 Z M560 455 L620 470 V520 L560 490 Z M520 560 L600 580 L660 640 L580 640 Z" />
        <path d="M418 925 L470 905 L452 970 Z M515 870 L545 820 L575 870 Z M640 830 H690 L715 870 V905 H660 Z M642 905 H684 V970 H642 Z M675 703 H728 V797 H690 L675 760 Z" strokeWidth="2.4" />
        <path d="M245 790 C270 740 320 700 350 695 C390 700 370 750 330 770 C290 800 260 840 245 830 Z M290 730 L340 770 M310 715 L350 750 M270 760 L310 795 M350 690 L380 650 L385 690 Z" strokeWidth="2.8" />
        <path d="M375 1000 C390 980 400 990 410 985 M430 800 C410 840 440 860 430 880 M470 540 C500 600 480 640 520 660 S560 720 600 700 S640 760 680 740 M460 200 C500 230 480 280 500 300 M520 620 L500 660 L540 680 L560 640 Z" strokeDasharray="7 3" />
        <path d="M610 780 L640 820 L600 830 Z M650 560 L640 620 M700 700 C720 740 690 780 700 800 M590 430 L600 500 L640 520" strokeWidth="3" strokeDasharray="5 4" />
      </g>
      <g fill="none" stroke="#e6bbe9" strokeWidth="2" strokeDasharray="9 4">
        <path d="M175 210 L215 420 L232 650 L250 600 M625 75 L545 245 M395 250 L668 320 L640 470 L910 540 M290 345 L400 240 M400 460 L640 470 L905 495 M290 345 L380 410 M180 560 L240 500 M75 670 L250 450 M250 620 L330 650 M620 950 L635 1055 M420 660 L430 510 M285 890 L420 690 M590 500 V860" />
      </g>

      <g stroke="#9a9a9a" strokeWidth="1.7" fill="none">
        <path d={AIRWAYS.map(([a, b, c, d]) => `M${a} ${b}L${c} ${d}`).join("")} />
      </g>
      <g fill="#fff" fillOpacity=".75" stroke="#909090" strokeWidth="1.6">
        {AIRWAYS.map(([a, b, c, d], i) => {
          const n = Math.hypot(c - a, d - b) > 220 ? [0.28, 0.66] : [0.5];
          return n.map((t) => (
            <g key={`${i}-${t}`} transform={`translate(${a + (c - a) * t} ${b + (d - b) * t})`}>
              <path d="M-8 0 L-5 -6 H5 L8 0 L5 6 H-5 Z" />
              <path d="M-3 0 h6 M-4 9 h8 M-4 -9 h8" />
            </g>
          ));
        })}
      </g>
      <g>
        {AIRWAYS.map(([a, b, c, d], i) => (
          <g key={i}>
            <circle cx={a} cy={b} r="3.4" fill="#333" />
            <circle cx={a + (c - a) * 0.46} cy={b + (d - b) * 0.46} r="2.4" fill="#444" />
            <path d={`M${a + 7} ${b + 7} h15`} stroke="#999" strokeWidth="2.4" />
          </g>
        ))}
        {specks.map((p, i) => {
          const at = `translate(${p.x} ${p.y}) rotate(${p.r})`;
          if (p.blue) return <path key={i} d="M-12 0 H12 M-7 4 H8" stroke="#68c2e4" strokeWidth="2.6" transform={at} />;
          if (p.k < 0.45) return <path key={i} d="M-7 0 L-4 -5 H4 L7 0 L4 5 H-4 Z" fill="none" stroke="#7a7a7a" strokeWidth="1.7" transform={at} />;
          if (p.k < 0.6) return <circle key={i} cx={p.x} cy={p.y} r="2.6" fill="#333" />;
          return <path key={i} d="M-10 0 H10" stroke="#858585" strokeWidth="2.4" transform={at} />;
        })}
      </g>
      <g fill="none" stroke="#35a9dc" strokeWidth="2.6">
        {[[424, 235], [446, 395], [430, 415], [513, 437], [497, 888], [323, 722], [653, 638], [655, 937], [520, 620], [610, 875], [465, 487], [687, 877]].map(([x, y]) => (
          <g key={`${x}-${y}`}>
            <circle cx={x} cy={y} r="9" strokeOpacity=".5" />
            <path d={`M${x - 5} ${y} h10 M${x} ${y - 5} v10`} />
          </g>
        ))}
      </g>

      <path d={CHART_EDGE} fill="none" stroke="#4ba4f3" strokeWidth="3" />
      <path d={CHART_EDGE} fill="none" stroke="#6fc0ec" strokeWidth="8" strokeDasharray="2 14" />
      {EDGE_LABELS.map(([x, y, r], i) => (
        <path key={i} d="M-22 -5 H20 M-18 1 H24 M-22 7 H12" stroke="#8dd3eb" strokeWidth="3" strokeDasharray="5 1.5" transform={`translate(${x} ${y}) rotate(${r})`} />
      ))}
      <g>
        <T x={305} y={63} s={8} w={52} c="TAIPEI FIR (RCAA)" fill="#444" />
        <T x={305} y={82} s={8} w={50} c="MANILA FIR (RPHI)" fill="#444" />
        <T x={688} y={64} s={8} w={52} c="FUKUOKA FIR (RJJJ)" fill="#444" />
        <T x={688} y={82} s={8} w={54} c="MANILA FIR (RPHI)" fill="#444" />
        <T x={285} y={1051} s={8} w={76} c="UJUNG PANDANG FIR (WAAF)" fill="#444" />
        <T x={285} y={1069} s={8} w={76} c="UJUNG PANDANG FIR (WAAF)" fill="#444" />
        <T x={494} y={1053} s={8} w={48} c="MANILA FIR (RPHI)" fill="#444" />
        <T x={494} y={1069} s={8} w={56} c="UJUNG PANDANG FIR" fill="#444" />
        <T x={127} y={238} s={8} w={62} c="HO CHI MINH FIR" r={-52} fill="#444" />
        <T x={74} y={395} s={8} w={80} c="HO CHI MINH FIR (VVTS)" r={-86} fill="#444" />
        <T x={66} y={600} s={8} w={60} c="SINGAPORE FIR" r={-86} fill="#444" />
        <T x={92} y={595} s={8} w={60} c="MANILA FIR" r={-86} fill="#444" />
        <T x={925} y={665} s={8} w={140} c="OAKLAND OCEANIC FIR (KZAK)" r={-89} fill="#444" />
        <T x={905} y={620} s={8} w={60} c="MANILA FIR (RPHI)" r={-89} fill="#444" />
        <T x={548} y={240} s={8} w={170} c="CONTROLLED AIRSPACE BOUNDARY LINE" r={-66} fill="#777" />
        <T x={250} y={350} s={8} w={200} c="CONTROLLED AIRSPACE FL200 MANILA TMA" r={-88} fill="#666" />
        <T x={305} y={338} s={8} w={66} c="AREA CONTROL LINE" r={-48} fill="#777" />
        <T x={188} y={290} s={8} w={72} c="AREA CONTROL LINE" r={80} fill="#777" />
        <T x={170} y={560} s={8} w={60} c="AREA CONTROL LINE" r={-52} fill="#777" />
        <T x={305} y={842} s={8} w={72} c="AREA CONTROL LINE" r={-60} fill="#777" />
        <T x={825} y={486} s={8} w={80} c="AREA CONTROL LINE" r={6} fill="#777" />
        <T x={640} y={470} s={8} w={90} c="AREA CONTROL LINE" r={-82} fill="#777" />
        <T x={625} y={980} s={8} w={60} c="AREA CONTROL LINE" r={84} fill="#777" />
      </g>

      <path d="M622 543 H729" stroke="#333" strokeWidth="3" />
      {SECTORS.map(([x, y]) => (
        <g key={`${x}-${y}`}>
          <rect x={x} y={y} width="54" height="31" fill="#fff" stroke="#aaa" strokeWidth="2" />
          <path d={`M${x + 3} ${y} v31`} stroke="#111" strokeWidth="6" strokeDasharray="7 1.2" />
          <path d={`M${x + 4} ${y + 31} H${x + 54}`} stroke="#222" strokeWidth="3" />
          <T x={x + 30} y={y - 2} s={8} c="SECTOR" a="middle" fill="#444" />
          <T x={x + 31} y={y + 10} s={8} c="MANILA CTL" a="middle" w={38} fill="#666" />
          <T x={x + 31} y={y + 19} s={7} c="UNL" a="middle" fill="#444" />
          <T x={x + 31} y={y + 28} s={8} c="MANILA ACC" a="middle" w={38} fill="#444" />
        </g>
      ))}
      {SMALL_TAGS.map(([x, y]) => (
        <g key={`${x}-${y}`}>
          <rect x={x} y={y} width="18" height="10" fill="#fff" stroke="#999" strokeWidth="1.6" />
          <path d={`M${x} ${y} v10 h18`} fill="none" stroke="#333" strokeWidth="2.2" />
          <path d={`M${x + 5} ${y + 5} h9`} stroke="#888" strokeWidth="2" />
        </g>
      ))}
      {[[465, 165], [582, 365], [690, 550], [733, 695], [383, 760], [460, 760], [590, 800], [660, 190], [632, 900], [718, 905], [588, 962], [450, 838]].map(([x, y]) => (
        <path key={`${x}-${y}`} d={`M${x} ${y} h24 M${x} ${y + 8} h30`} stroke="#bdbdbd" strokeWidth="3" strokeDasharray="6 2" />
      ))}

      {/* Scale bar */}
      <rect x="52" y="1066" width="163" height="39" fill="#fff" stroke="#aaa" strokeWidth="2" />
      <T x={134} y={1074} s={8} w={44} c="SCALE 1:4 500 000" a="middle" fill="#444" />
      <path d="M62 1083 H204 M62 1095 H204" stroke="#bbb" strokeWidth="2" />
      <path d="M66 1089 H100 M116 1089 H142 M160 1093 H186" stroke="#111" strokeWidth="6" />
      <path d="M62 1085 H200" stroke="#333" strokeWidth="3" strokeDasharray="9 6" />

      {/* Legend */}
      <rect x="958" y="70" width="210" height="818" fill="#fff" stroke="#c8c8c8" strokeWidth="2.6" />
      <rect x="970" y="79" width="186" height="633" fill="#fff" stroke="#b8b8b8" strokeWidth="2.6" />
      <path d="M970 102 H1156 M970 115 H1156 M970 188 H1156 M970 265 H1156 M970 344 H1156 M970 407 H1156 M970 491 H1156 M970 540 H1156 M970 619 H1156" stroke="#c0c0c0" strokeWidth="2.4" />
      <text x="1021" y="97" fontSize="16" fontWeight="700" fill="#111" stroke="#111" strokeWidth="1" textLength="88">LEGEND</text>
      <T x={1063} y={111} s={7.5} w={150} c="AIR TRAFFIC SERVICES AND AIRSPACE INFORMATION" a="middle" fill="#333" />
      {[["BOUNDARIES", 122], ["SIGNIFICANT POINTS", 196], ["RADIO NAVIGATION AIDS", 272], ["ATS ROUTES", 353], ["CONTROL AND IDENTIFICATION", 416], ["RESTRICTED AIRSPACE", 499], ["TRAINING AIRSPACE", 546], ["NOTES", 629]].map(([t, y]) => (
        <T key={String(t)} x={975} y={Number(y)} s={7.5} c={String(t)} b={700} fill="#333" />
      ))}
      <path d="M993 133 H1034" stroke="#cfeaf4" strokeWidth="3" />
      <path d="M993 146 H1034" stroke="#7ccbe6" strokeWidth="7" />
      <path d="M993 157 H1034 M993 168 H1034" stroke="#8ad0e8" strokeWidth="2" />
      <path d="M993 178 H1034" stroke="#dba6e0" strokeWidth="2" strokeDasharray="8 3" />
      {[[133, 64], [146, 98], [157, 38], [168, 58], [178, 36], [209, 76], [220, 66], [233, 58], [245, 66], [250, 76], [286, 28], [298, 10], [310, 10], [322, 16], [334, 8], [359, 30], [366, 36], [375, 48], [388, 36], [395, 60], [435, 26], [454, 40], [463, 56], [474, 34], [481, 50], [511, 42], [523, 38], [560, 52], [582, 72], [603, 38], [612, 34]].map(([y, w]) => (
        <path key={y} d={`M1041 ${y} h${w}`} stroke="#9a9a9a" strokeWidth="2.6" strokeDasharray="9 1.2" />
      ))}
      {[209, 221, 234].map((y) => <circle key={y} cx="1015" cy={y} r="3" fill="#333" />)}
      <path d="M1003 247 H1027" stroke="#5ab9dd" strokeWidth="2" />
      <circle cx="1015" cy="247" r="3" fill="#222" />
      {[286, 298, 310, 322, 334].map((y) => (
        <rect key={y} x="1010" y={y - 5} width="10" height="9" fill="#e4f5fb" stroke="#6cc4e2" strokeWidth="2" />
      ))}
      <path d="M998 380 H1040 M1012 374 h14 l5 7 l-5 7 h-14 l-5 -7 Z M1006 430 h24 v12 h-24 Z M1006 453 h24 v20 h-24 Z" fill="none" stroke="#777" strokeWidth="2" />
      <path d="M1006 453 v20" stroke="#111" strokeWidth="5" />
      {[511, 553, 577, 600].map((y) => (
        <rect key={y} x="1011" y={y} width="17" height="13" fill="#e8f7fc" stroke="#62bfdf" strokeWidth="2.4" />
      ))}
      {[638, 644, 650, 660, 666, 673, 684, 690, 700].map((y, i) => (
        <path key={y} d={`M${i % 3 ? 975 : 983} ${y} H${y > 695 ? 1120 : 1150}`} stroke="#666" strokeWidth="2.8" strokeDasharray="13 1.6 7 1.2" />
      ))}
      <path d="M975 706 H995" stroke="#666" strokeWidth="2.8" />
      <rect x="978" y="720" width="170" height="164" fill="#fff" stroke="#b2b2b2" strokeWidth="2.4" />
      <T x={1062} y={730} s={7.5} w={126} c="TABLE OF CRUISING LEVELS AND SEMICIRCULAR" a="middle" fill="#444" />
      {[1022, 1101].map((x) => (
        <g key={x} fill="none" stroke="#b5b5b5" strokeWidth="2">
          <circle cx={x} cy="776" r="31" />
          <path d={`M${x} 738 V816`} stroke="#555" />
          <path d={`M${x - 12} 755 V799 M${x + 12} 755 V799`} strokeWidth="15" strokeDasharray="2.4 4" />
        </g>
      ))}
      {[[827, 990, 1134], [834, 990, 1022], [842, 1005, 1068], [850, 1005, 1040], [858, 1005, 1110], [868, 990, 1134], [877, 990, 1128]].map(([y, a, b]) => (
        <path key={y} d={`M${a} ${y} H${b}`} stroke="#444" strokeWidth="3.2" strokeDasharray="12 1.5 6 1.2" />
      ))}
    </svg>
  );
}

/* ------------------------------------------------------------------ */
/* Page                                                                */
/* ------------------------------------------------------------------ */

function Header() {
  return (
    <header className="flex h-[105px] shrink-0 items-start">
      <div className="flex w-[721px] items-center gap-6 pl-6 pt-[22px]">
        <Flag />
        <Logo className="h-[59px] w-20" />
      </div>
      <nav className="flex pt-[39px] text-[17.5px] leading-7 text-[#6b7280]">
        <a className="flex h-[46px] w-[88px] items-start border-b-2 border-[#38bdf8] pl-1 text-[#60a5fa]">
          <FaHouse className="mr-2 mt-1 h-[18px] w-5 text-[#51a7fb]" />
          <span>HOME</span>
        </a>
        <a className="ml-[37px] w-[67px]">AIP</a>
        <a className="w-[106px] tracking-[0.5px]">NOTAM</a>
        <a className="tracking-[-0.3px]">ABOUT US</a>
      </nav>
      <div className="ml-auto flex gap-6 pr-6 pt-[30px] text-[18px] font-medium text-white">
        <button className="h-11 w-20 rounded-md bg-[#3b82f6] shadow-md">Login</button>
        <button className="h-11 w-[106px] rounded-md bg-[#22c55e] tracking-[0.3px] shadow-md">Register</button>
      </div>
    </header>
  );
}

export default function App() {
  return (
    <div className="flex h-[922px] w-[1856px] flex-col overflow-hidden border-t border-black bg-white font-['Inter',sans-serif] [font-feature-settings:'cv11','ss03']">
      <div className="flex min-h-0 flex-1">
        <div className="flex flex-1 flex-col">
          <Header />
          <main className="flex flex-1 pl-16">
            <section className="flex w-[1066px] flex-col items-start pt-[119px]">
              <Logo className="ml-4 h-[71px] w-[97px]" />
              <h1 className="mt-[34px] whitespace-nowrap">
                <span className="-ml-0.5 block h-[97px] text-[94px] font-black leading-[96px] tracking-[3.3px] text-[#036aa1]">Aeronautical</span>
                <span className="block h-[72px] text-[70px] font-extrabold leading-[72px] tracking-[2.1px] text-[#3a3a3a]">Information Services</span>
              </h1>
              <p className="mt-5 whitespace-nowrap text-[14px] italic leading-5 tracking-[0.4px] text-[#6b7280]">
                The AIS maintains and manages all related data within the Philippine FIR, and process it to an information essential to flight - to
                <br />
                <span className="tracking-[0.33px]">satisfy the needs of the users in aviation such as pilots, document producing agencies, ATS, etc.</span>
              </p>
              <div className="mt-16 flex items-center gap-10">
                <button className="h-[50px] w-40 rounded-full bg-[#1f2937] text-[16px] font-medium tracking-[0.3px] text-gray-200">Get Started</button>
                <a className="text-[16px] text-[#333]">Learn More</a>
              </div>
            </section>
            <section className="relative mt-[43px] h-[602px] w-[640px]">
              <AreaChart />
              <EnrouteChart />
              <AerodromeMap />
            </section>
          </main>
        </div>
        <div className="w-[14px] bg-[#f1f1f1]">
          <div className="h-[380px] rounded-full bg-[#51a7fb]" />
        </div>
      </div>
    </div>
  );
}
